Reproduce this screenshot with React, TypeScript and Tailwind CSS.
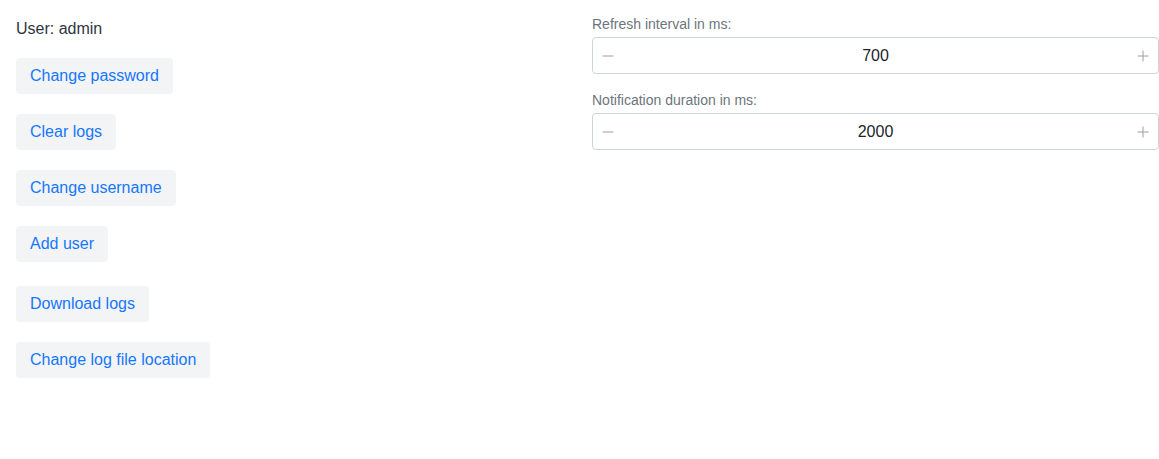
import React, { useState } from 'react';

type NumberFieldProps = {
  label: string;
  value: number;
  step?: number;
  onChange: (v: number) => void;
};

function NumberField({ label, value, step = 100, onChange }: NumberFieldProps) {
  return (
    <div>
      <label className="block text-[14px] leading-[17px] text-[#6c757d] mb-[4px]">{label}</label>
      <div className="flex h-[37px] w-full items-center rounded-[4px] border border-[#ced4da] bg-white">
        <button
          type="button"
          onClick={() => onChange(value - step)}
          className="flex h-full w-[30px] items-center justify-center text-[#9aa0a6]"
          aria-label="Decrease"
        >
          <svg width="12" height="12" viewBox="0 0 12 12" aria-hidden="true">
            <path d="M0.5 6h11" stroke="currentColor" strokeWidth="1" />
          </svg>
        </button>
        <input
          className="h-full flex-1 min-w-0 bg-transparent text-center text-[16px] text-[#212529] outline-none"
          value={value}
          onChange={(e) => onChange(Number(e.target.value) || 0)}
        />
        <button
          type="button"
          onClick={() => onChange(value + step)}
          className="flex h-full w-[30px] items-center justify-center text-[#9aa0a6]"
          aria-label="Increase"
        >
          <svg width="12" height="12" viewBox="0 0 12 12" aria-hidden="true">
            <path d="M0.5 6h11M6 0.5v11" stroke="currentColor" strokeWidth="1" />
          </svg>
        </button>
      </div>
    </div>
  );
}

function ActionButton({ children }: { children: React.ReactNode }) {
  return (
    <button
      type="button"
      className="h-[36px] rounded-[4px] bg-[#f3f4f6] px-[14px] text-[16px] text-[#1677ff] hover:bg-[#e9ecef]"
    >
      {children}
    </button>
  );
}

export default function App() {
  const [refresh, setRefresh] = useState(700);
  const [duration, setDuration] = useState(2000);

  return (
    <div
      className="flex min-h-[459px] bg-white pl-4 pt-[18px]"
      style={{ fontFamily: '"Liberation Sans", Arial, sans-serif' }}
    >
      <div className="flex flex-1 flex-col items-start">
        <p className="mt-px text-[16px] leading-[20px] text-[#2f3640]">User: admin</p>
        <div className="mt-[19px] flex flex-col items-start gap-[20px]">
          <ActionButton>Change password</ActionButton>
          <ActionButton>Clear logs</ActionButton>
          <ActionButton>Change username</ActionButton>
          <ActionButton>Add user</ActionButton>
        </div>
        <div className="mt-[24px] flex flex-col items-start gap-[20px]">
          <ActionButton>Download logs</ActionButton>
          <ActionButton>Change log file location</ActionButton>
        </div>
      </div>
      <div className="flex w-[567px] flex-col gap-[18px] -mt-[2px]">
        <NumberField label="Refresh interval in ms:" value={refresh} onChange={setRefresh} />
        <NumberField label="Notification duration in ms:" value={duration} onChange={setDuration} step={500} />
      </div>
    </div>
  );
}
